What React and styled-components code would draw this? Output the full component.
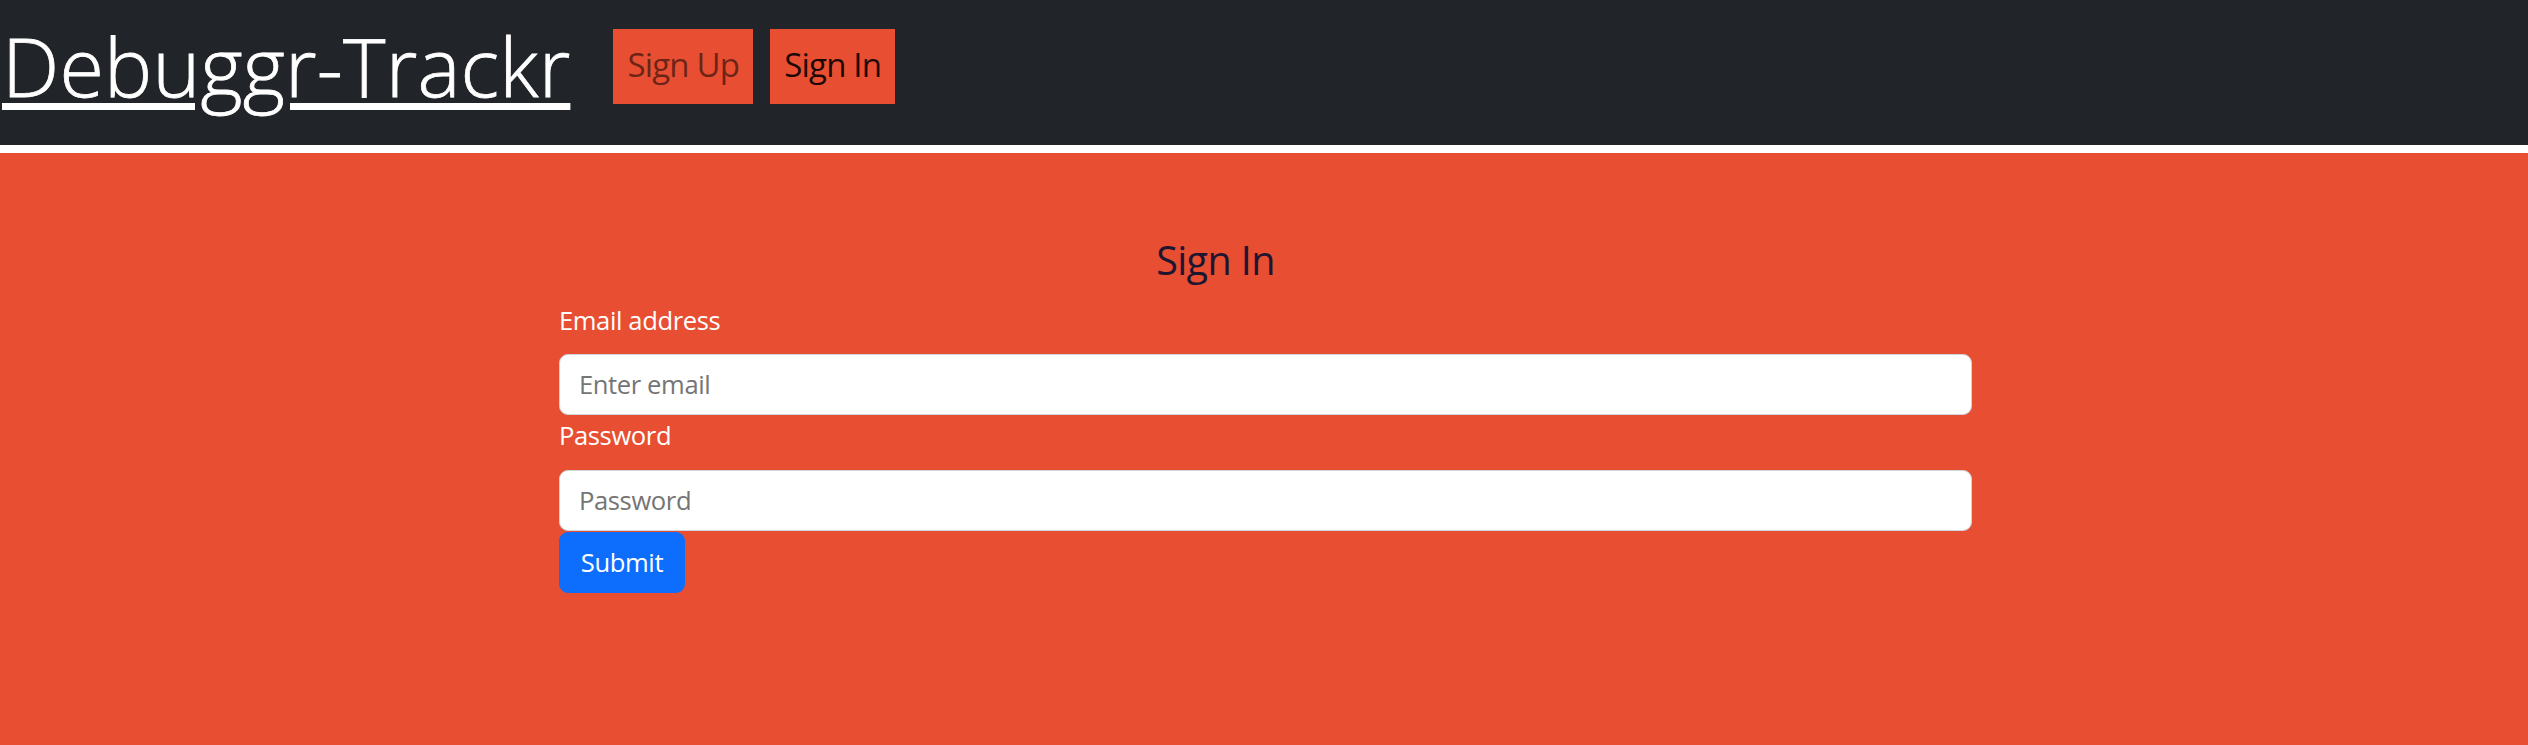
import React from 'react';
import styled, { createGlobalStyle } from 'styled-components';

const GlobalStyle = createGlobalStyle`
  html, body {
    margin: 0;
    padding: 0;
    background: #ffffff;
    font-family: "Open Sans", "Noto Sans", sans-serif;
  }
  * {
    box-sizing: border-box;
  }
`

const Page = styled.div`
  display: flex;
  flex-direction: column;
  min-height: 100vh;
`

const NavBar = styled.nav`
  display: flex;
  align-items: flex-start;
  height: 145px;
  background: #212529;
  padding: 0 0 0 2px;
`

const Brand = styled.a`
  color: #ffffff;
  font-size: 81px;
  font-weight: 300;
  line-height: 110px;
  margin-top: 11px;
  text-decoration: underline;
  text-decoration-thickness: 7px;
  text-underline-offset: 6px;
  letter-spacing: 0.2px;
  -webkit-text-stroke: 0.8px #ffffff;
  cursor: pointer;
`

const NavLinks = styled.div`
  display: flex;
  gap: 17px;
  margin-left: 43px;
  margin-top: 29px;
`

const NavButton = styled.a`
  display: flex;
  align-items: center;
  height: 75px;
  padding: 0 14px 4px;
  background: #e74e32;
  color: ${(p) => (p.active ? 'rgba(0, 0, 0, 0.9)' : 'rgba(0, 0, 0, 0.55)')};
  font-size: 33px;
  font-weight: 400;
  letter-spacing: -0.8px;
  cursor: pointer;
`

const Main = styled.main`
  flex: 1;
  margin-top: 8px;
  background: #e74e32;
  padding-top: 84px;
`

const FormBox = styled.form`
  width: 1413px;
  margin-left: calc(50% - 705px);
`

const Title = styled.h4`
  margin: 0 0 19px;
  padding-right: 100px;
  text-align: center;
  font-size: 39.5px;
  font-weight: 400;
  line-height: 46px;
  color: #1e1530;
  letter-spacing: -0.6px;
`

const Field = styled.div`
  margin-bottom: ${(p) => p.gap || 0}px;
`

const Label = styled.label`
  display: block;
  margin-bottom: 14px;
  color: #ffffff;
  font-size: 25.6px;
  line-height: 38.4px;
  letter-spacing: -0.4px;
`

const Input = styled.input`
  display: block;
  width: 100%;
  height: 61px;
  padding: 0 19px;
  border: 1.6px solid #ced4da;
  border-radius: 9px;
  background: #ffffff;
  font-family: inherit;
  font-size: 25.6px;
  color: #212529;
  letter-spacing: -0.4px;
  ::placeholder {
    color: #6c757d;
  }
  :focus {
    outline: none;
  }
`

const SubmitButton = styled.button`
  display: block;
  width: 126px;
  height: 61px;
  margin-top: 1px;
  border: none;
  border-radius: 9px;
  background: #0d6efd;
  color: #ffffff;
  font-family: inherit;
  font-size: 25.6px;
  letter-spacing: -0.4px;
  cursor: pointer;
`

export default function App() {
  return (
    <Page>
      <GlobalStyle />
      <NavBar>
        <Brand>Debuggr-Trackr</Brand>
        <NavLinks>
          <NavButton>Sign Up</NavButton>
          <NavButton active>Sign In</NavButton>
        </NavLinks>
      </NavBar>
      <Main>
        <FormBox onSubmit={(e) => e.preventDefault()}>
          <Title>Sign In</Title>
          <Field gap={2}>
            <Label>Email address</Label>
            <Input type="email" placeholder="Enter email" />
          </Field>
          <Field>
            <Label>Password</Label>
            <Input type="password" placeholder="Password" />
          </Field>
          <SubmitButton type="submit">Submit</SubmitButton>
        </FormBox>
      </Main>
    </Page>
  )
}
